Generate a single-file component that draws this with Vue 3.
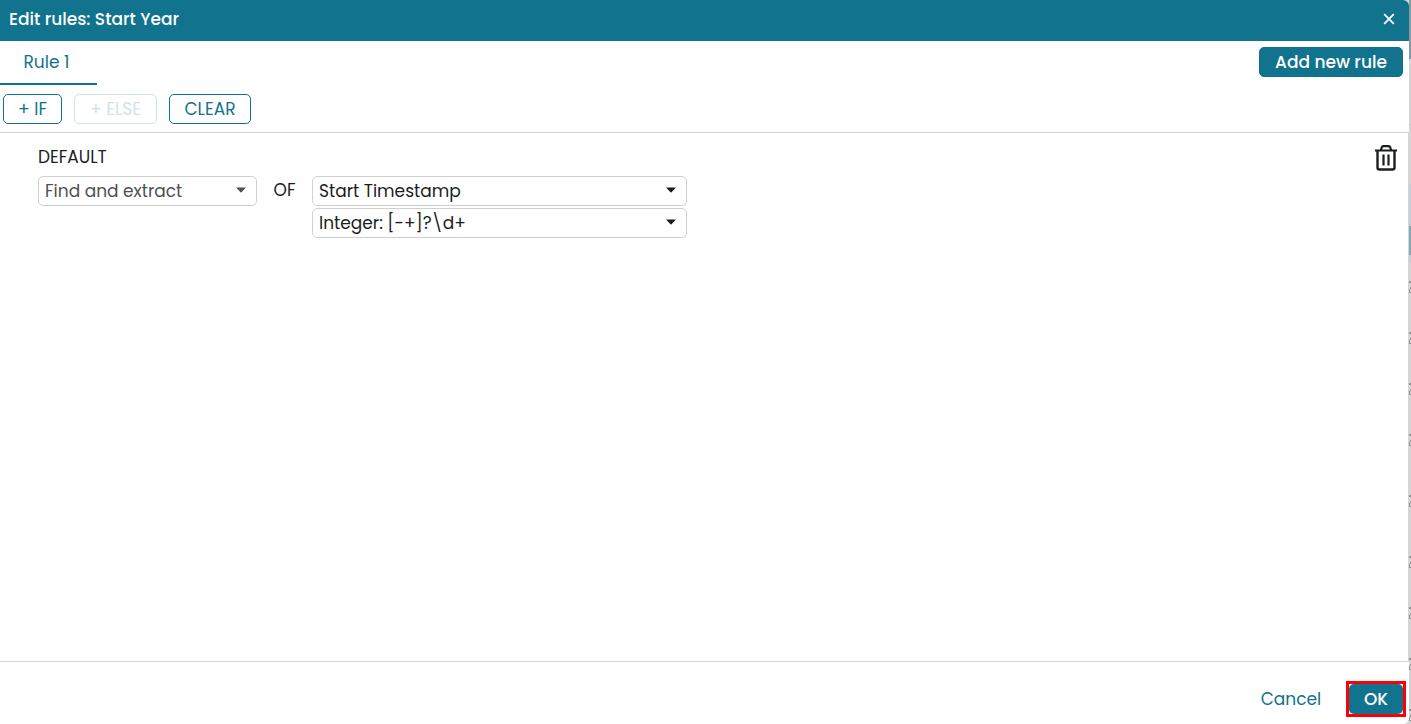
<script setup>
import { ref } from 'vue'

const operation = ref('Find and extract')
const column = ref('Start Timestamp')
const pattern = ref('Integer: [-+]?\\d+')
const marks = [281, 332, 383, 434, 495, 556, 607, 658, 709]
</script>

<template>
  <div class="screen">
    <svg class="backdrop" width="2" height="724" aria-hidden="true">
      <rect width="2" height="724" fill="#d5d5d6" />
      <rect width="2" height="59" fill="#8499a1" />
      <rect y="124" width="2" height="1" fill="#c8c8ca" />
      <rect y="184" width="2" height="78" fill="#c5ced3" />
      <rect y="226" width="2" height="29" fill="#86a8b2" />
      <g v-for="y in marks" :key="y" fill="#929294">
        <rect :y="y" width="2" height="2" />
        <rect x="1" :y="y + 6" width="1" height="2" />
        <rect :y="y + 8" width="1" height="4" />
        <rect x="1" :y="y + 11" width="1" height="1" />
      </g>
    </svg>
    <section class="dialog" role="dialog" aria-labelledby="title">
      <header class="titlebar">
        <h1 id="title">Edit rules: Start Year</h1>
        <button class="close" type="button" aria-label="Close">
          <svg width="12" height="12" viewBox="0 0 12 12"><path d="M1.200 1.200 10.800 10.800M10.800 1.200 1.200 10.800" stroke="#fff" stroke-width="1.800" /></svg>
        </button>
      </header>
      <nav class="tabs">
        <button class="tab" type="button">Rule 1</button>
        <button class="btn solid add" type="button">Add new rule</button>
      </nav>
      <div class="toolbar">
        <button class="btn if" type="button">+ IF</button>
        <button class="btn else" type="button" disabled>+ ELSE</button>
        <button class="btn clear" type="button">CLEAR</button>
      </div>
      <main class="rules">
        <div class="rule">
          <h2>DEFAULT</h2>
          <div class="expression">
            <div class="field small muted">
              <select v-model="operation" aria-label="Operation"><option>Find and extract</option></select>
              <svg class="arrow" width="12" height="6" viewBox="0 0 12 6"><path d="M1 0.500H11L6.500 5.300Q6 5.700 5.500 5.300Z" fill="currentColor" /></svg>
            </div>
            <span class="of">OF</span>
            <div class="operands">
              <div class="field">
                <select v-model="column" aria-label="Column"><option>Start Timestamp</option></select>
                <svg class="arrow" width="12" height="6" viewBox="0 0 12 6"><path d="M1 0.500H11L6.500 5.300Q6 5.700 5.500 5.300Z" fill="currentColor" /></svg>
              </div>
              <div class="field">
                <select v-model="pattern" aria-label="Pattern"><option>Integer: [-+]?\d+</option></select>
                <svg class="arrow" width="12" height="6" viewBox="0 0 12 6"><path d="M1 0.500H11L6.500 5.300Q6 5.700 5.500 5.300Z" fill="currentColor" /></svg>
              </div>
            </div>
          </div>
        </div>
        <button class="delete" type="button" aria-label="Delete rule">
          <svg width="22" height="26" viewBox="0 0 22 26" fill="none" stroke="#1b1d1e">
            <path d="M0 5.500H22" stroke-width="2" />
            <path d="M6 5.500Q6.500 1.200 8.500 1.200H13.500Q15.500 1.200 16 5.500" stroke-width="2.200" />
            <path d="M2.500 5.500V22.500Q2.500 24.500 4.500 24.500H17.500Q19.500 24.500 19.500 22.500V5.500" stroke-width="2.400" />
            <path d="M8.500 9.500V20.500M13.500 9.500V20.500" stroke-width="2.200" />
          </svg>
        </button>
      </main>
      <footer class="actions">
        <button class="btn cancel" type="button">Cancel</button>
        <div class="highlight">
          <button class="btn solid ok" type="button">OK</button>
        </div>
      </footer>
    </section>
  </div>
</template>

<style>
body {
  margin: 0;
}
</style>

<style scoped>
.screen {
  position: relative;
  display: flex;
  min-height: 100vh;
  padding-right: 2px;
  box-sizing: border-box;
  background: #d5d5d6;
  color: #1b1d1e;
  font-family: Poppins, Inter, sans-serif;
  font-size: 17px;
}
.backdrop {
  position: absolute;
  top: 0;
  right: 0;
}
.dialog {
  flex: 1;
  display: flex;
  flex-direction: column;
  background: #fff;
  border-radius: 0 6px 6px 0;
  overflow: hidden;
}
button,
select {
  font: inherit;
  box-sizing: border-box;
  margin: 0;
}
button {
  padding: 0;
  border: 0;
  background: none;
  color: #11728c;
}
.titlebar {
  display: flex;
  align-items: center;
  justify-content: space-between;
  height: 41px;
  padding: 0 14px 4px 9px;
  box-sizing: border-box;
  background: #11738d;
  color: #fff;
}
h1 {
  margin: 0;
  font-size: 17px;
  font-weight: 500;
}
.close {
  display: flex;
}
.tabs {
  display: flex;
  align-items: center;
  justify-content: space-between;
  height: 44px;
  padding-right: 6px;
}
.tab {
  width: 97px;
  height: 44px;
  padding-right: 4px;
  border-bottom: 2px solid #11728c;
}
.btn {
  height: 30px;
  border: 1px solid #11728c;
  border-radius: 5px;
}
.solid {
  background: #11738d;
  color: #fff;
  font-weight: 500;
}
.add {
  width: 144px;
  margin-bottom: 2px;
}
.toolbar {
  display: flex;
  gap: 12px;
  padding: 9px 3px 8px;
  border-bottom: 1px solid #d5d5d6;
}
.if {
  width: 59px;
}
.else {
  width: 83px;
  color: #d0e3e8;
  border-color: #d0e3e8;
}
.clear {
  width: 82px;
}
.rules {
  flex: 1;
  display: flex;
  align-items: flex-start;
  justify-content: space-between;
  padding: 12px 11px 0 38px;
  border-right: 1px solid #d5d5d6;
}
h2 {
  margin: 0;
  font-size: 17px;
  font-weight: 400;
  line-height: 24px;
}
.expression {
  display: flex;
  align-items: flex-start;
  margin-top: 7px;
}
.field {
  position: relative;
  width: 375px;
}
.small {
  width: 219px;
}
.muted {
  color: #4e5051;
}
select {
  display: block;
  width: 100%;
  height: 30px;
  padding: 0 30px 0 6px;
  border: 1px solid #d0d0d1;
  border-radius: 5px;
  background: #fff;
  color: inherit;
  appearance: none;
}
.arrow {
  position: absolute;
  right: 10px;
  top: 11px;
  pointer-events: none;
}
.of {
  width: 55px;
  line-height: 28px;
  text-align: center;
}
.operands {
  display: grid;
  gap: 2px;
}
.delete {
  display: flex;
}
.actions {
  display: flex;
  align-items: center;
  justify-content: flex-end;
  gap: 15px;
  padding: 19px 3px 7px;
  border-top: 1px solid #d5d5d6;
}
.cancel {
  width: 80px;
  border: 0;
}
.highlight {
  border: 3px solid #fb0007;
}
.ok {
  display: block;
  width: 54px;
  border: 0;
}
</style>
